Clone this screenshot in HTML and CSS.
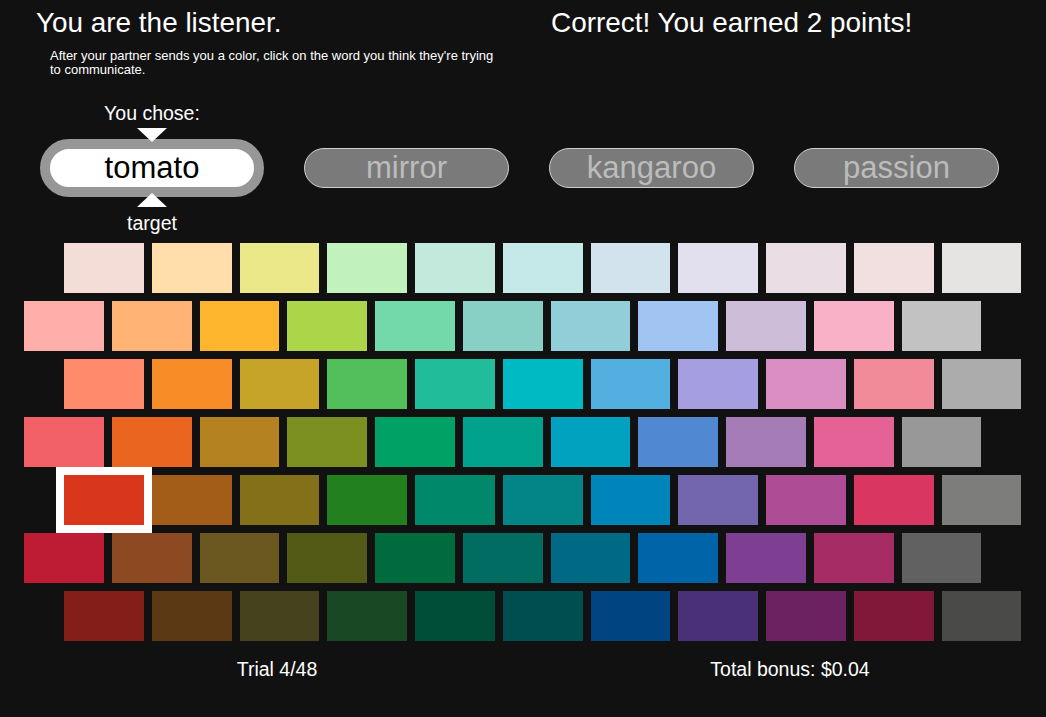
FILE: index.html
```html
<!DOCTYPE html>
<html lang="en">
<head>
<meta charset="utf-8">
<title>Listener</title>
<link rel="stylesheet" href="styles.css">
</head>
<body>
<div class="page">
  <header class="top">
    <div class="intro">
      <h1 class="title">You are the listener.</h1>
      <p class="instructions">After your partner sends you a color, click on the word you think they're trying to communicate.</p>
    </div>
    <h1 class="title feedback">Correct! You earned 2 points!</h1>
  </header>

  <section class="choices">
    <div class="chosen">
      <span class="caption">You chose:</span>
      <span class="tri tri-down"></span>
      <button class="word word-selected">tomato</button>
      <span class="tri tri-up"></span>
      <span class="caption caption-bottom">target</span>
    </div>
    <button class="word">mirror</button>
    <button class="word">kangaroo</button>
    <button class="word">passion</button>
  </section>

  <section class="palette">
    <div class="swatch-row row-in">
      <div class="swatch" style="background:#f4ddd6"></div>
      <div class="swatch" style="background:#ffdeab"></div>
      <div class="swatch" style="background:#ebe88a"></div>
      <div class="swatch" style="background:#c1f1bd"></div>
      <div class="swatch" style="background:#c2e9dc"></div>
      <div class="swatch" style="background:#c5e9e9"></div>
      <div class="swatch" style="background:#d2e3ee"></div>
      <div class="swatch" style="background:#e2e0ee"></div>
      <div class="swatch" style="background:#ebdde4"></div>
      <div class="swatch" style="background:#f2dfdf"></div>
      <div class="swatch" style="background:#e5e4e2"></div>
    </div>
    <div class="swatch-row row-out">
      <div class="swatch" style="background:#ffafaa"></div>
      <div class="swatch" style="background:#ffb374"></div>
      <div class="swatch" style="background:#ffb62f"></div>
      <div class="swatch" style="background:#acd54a"></div>
      <div class="swatch" style="background:#73d9aa"></div>
      <div class="swatch" style="background:#88d0c6"></div>
      <div class="swatch" style="background:#91ced8"></div>
      <div class="swatch" style="background:#a2c4f2"></div>
      <div class="swatch" style="background:#cdbdd9"></div>
      <div class="swatch" style="background:#f9b1c8"></div>
      <div class="swatch" style="background:#c2c2c2"></div>
    </div>
    <div class="swatch-row row-in">
      <div class="swatch" style="background:#ff8a6c"></div>
      <div class="swatch" style="background:#f88d27"></div>
      <div class="swatch" style="background:#c6a428"></div>
      <div class="swatch" style="background:#52bf5b"></div>
      <div class="swatch" style="background:#21bc99"></div>
      <div class="swatch" style="background:#00bac3"></div>
      <div class="swatch" style="background:#52afdf"></div>
      <div class="swatch" style="background:#a59fe1"></div>
      <div class="swatch" style="background:#db8ec1"></div>
      <div class="swatch" style="background:#f28b99"></div>
      <div class="swatch" style="background:#acacac"></div>
    </div>
    <div class="swatch-row row-out">
      <div class="swatch" style="background:#f26167"></div>
      <div class="swatch" style="background:#ea6620"></div>
      <div class="swatch" style="background:#b48221"></div>
      <div class="swatch" style="background:#7b9020"></div>
      <div class="swatch" style="background:#00a164"></div>
      <div class="swatch" style="background:#00a28d"></div>
      <div class="swatch" style="background:#00a2bf"></div>
      <div class="swatch" style="background:#5089d2"></div>
      <div class="swatch" style="background:#a57cb6"></div>
      <div class="swatch" style="background:#e46295"></div>
      <div class="swatch" style="background:#989898"></div>
    </div>
    <div class="swatch-row row-in">
      <div class="swatch swatch-selected" style="background:#d9371b"></div>
      <div class="swatch" style="background:#a35d18"></div>
      <div class="swatch" style="background:#837019"></div>
      <div class="swatch" style="background:#22801f"></div>
      <div class="swatch" style="background:#00886a"></div>
      <div class="swatch" style="background:#038486"></div>
      <div class="swatch" style="background:#0085ba"></div>
      <div class="swatch" style="background:#7365ae"></div>
      <div class="swatch" style="background:#af4c96"></div>
      <div class="swatch" style="background:#da3662"></div>
      <div class="swatch" style="background:#7d7d7b"></div>
    </div>
    <div class="swatch-row row-out">
      <div class="swatch" style="background:#be1c34"></div>
      <div class="swatch" style="background:#8c4922"></div>
      <div class="swatch" style="background:#6b5720"></div>
      <div class="swatch" style="background:#525a15"></div>
      <div class="swatch" style="background:#006c3d"></div>
      <div class="swatch" style="background:#006c62"></div>
      <div class="swatch" style="background:#006a84"></div>
      <div class="swatch" style="background:#0064a8"></div>
      <div class="swatch" style="background:#7e3e91"></div>
      <div class="swatch" style="background:#a52c65"></div>
      <div class="swatch" style="background:#616161"></div>
    </div>
    <div class="swatch-row row-in">
      <div class="swatch" style="background:#831f18"></div>
      <div class="swatch" style="background:#5c3915"></div>
      <div class="swatch" style="background:#46421e"></div>
      <div class="swatch" style="background:#194924"></div>
      <div class="swatch" style="background:#004e38"></div>
      <div class="swatch" style="background:#004e50"></div>
      <div class="swatch" style="background:#004581"></div>
      <div class="swatch" style="background:#493077"></div>
      <div class="swatch" style="background:#6c2160"></div>
      <div class="swatch" style="background:#811739"></div>
      <div class="swatch" style="background:#4a4a48"></div>
    </div>
  </section>

  <footer class="status">
    <span class="status-item">Trial 4/48</span>
    <span class="status-item">Total bonus: $0.04</span>
  </footer>
</div>
</body>
</html>
```

FILE: styles.css
```css
html, body {
  margin: 0;
  padding: 0;
  background: #111111;
}

body {
  font-family: "Liberation Sans", Arial, Helvetica, sans-serif;
  color: #ffffff;
  width: 1046px;
  height: 717px;
  overflow: hidden;
}

.page {
  display: flex;
  flex-direction: column;
}

/* Header */
.top {
  display: flex;
  padding-top: 7px;
  padding-left: 36px;
}

.intro {
  width: 515px;
}

.title {
  margin: 0;
  font-size: 27.9px;
  line-height: 31px;
  font-weight: normal;
  white-space: nowrap;
}

.instructions {
  margin: 11px 0 0 14px;
  width: 450px;
  font-size: 13px;
  line-height: 14px;
}

/* Word choices */
.choices {
  display: flex;
  align-items: center;
  gap: 40px;
  padding-left: 40px;
  margin-top: 24.5px;
}

.chosen {
  display: flex;
  flex-direction: column;
  align-items: center;
}

.caption {
  font-size: 19.5px;
  line-height: 22px;
}

.caption-bottom {
  margin-top: 5px;
}

.tri {
  width: 0;
  height: 0;
  border-left: 15.5px solid transparent;
  border-right: 15.5px solid transparent;
  position: relative;
  z-index: 1;
}

.tri-down {
  border-top: 14px solid #ffffff;
  margin-top: 4px;
  margin-bottom: -3px;
}

.tri-up {
  border-bottom: 14px solid #ffffff;
  margin-top: -4px;
}

.word {
  box-sizing: content-box;
  width: 203px;
  height: 38px;
  padding: 0;
  margin: 0;
  border: 1px solid #cfcfcf;
  border-radius: 999px;
  background: #7a7a7a;
  color: #bcbcbc;
  font-family: "Liberation Sans", Arial, Helvetica, sans-serif;
  font-size: 31px;
  line-height: 38px;
  text-align: center;
  cursor: pointer;
}

.word-selected {
  width: 204px;
  border: 10px solid #979797;
  background: #ffffff;
  color: #000000;
}

/* Palette */
.palette {
  display: flex;
  flex-direction: column;
  gap: 8px;
  margin-top: 9.5px;
}

.swatch-row {
  display: flex;
  gap: 8px;
}

.row-in {
  padding-left: 64px;
}

.row-out {
  padding-left: 24px;
}

.swatch {
  width: 79.75px;
  height: 50px;
  flex: none;
}

.swatch-selected {
  outline: 8px solid #ffffff;
}

/* Footer */
.status {
  display: grid;
  grid-template-columns: 554px 472px;
  margin-top: 17.3px;
  font-size: 19.5px;
  line-height: 22px;
}

.status-item {
  text-align: center;
}
```
